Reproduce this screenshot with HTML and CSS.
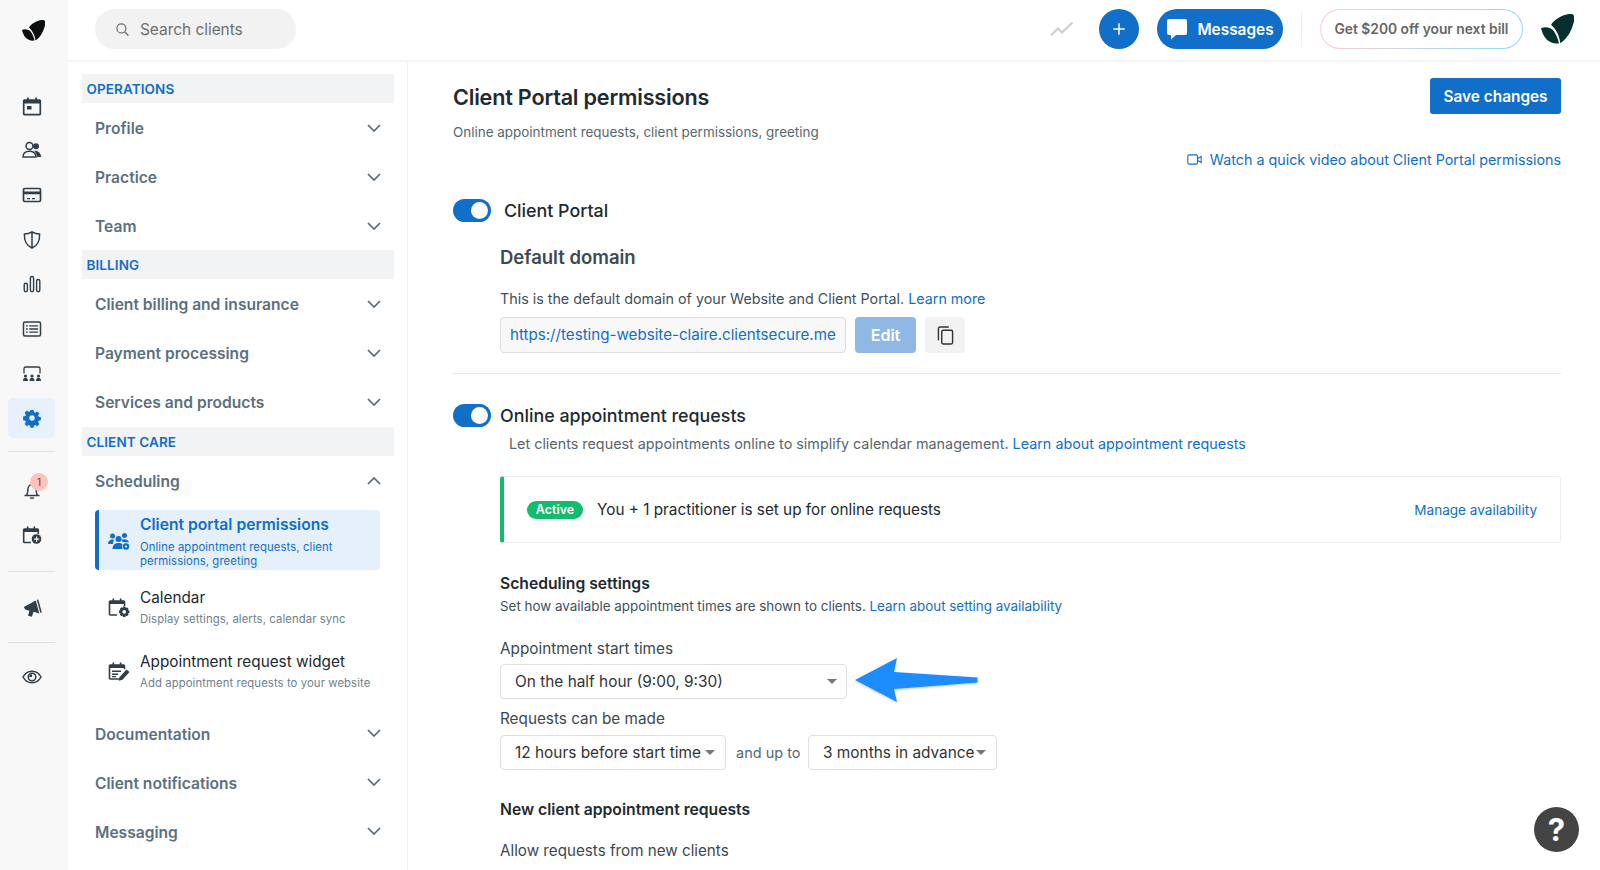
FILE: index.html
```html
<!DOCTYPE html>
<html lang="en">
<head>
<meta charset="utf-8">
<title>Client Portal permissions</title>
<link rel="stylesheet" href="styles.css">
</head>
<body>
<svg class="defs" width="0" height="0">
  <symbol id="chev" viewBox="0 0 14 8"><path d="M1 1l6 6 6-6" fill="none" stroke="currentColor" stroke-width="1.7"/></symbol>
  <symbol id="leaf" viewBox="0 0 46 42"><path d="M0 20C6 17 14 19 18 24C22 30 24 36 25 41C12 43 3 34 0 20Z"/><path d="M14 15C18 8 32-1 43 0C48 1 47 8 45 14C42 25 36 35 27 41C26 32 22 22 14 15Z"/></symbol>
  <symbol id="caret" viewBox="0 0 10 5"><path d="M0 0h10L5 5z"/></symbol>
</svg>
<div class="app">
  <nav class="rail">
    <svg class="logo"><use href="#leaf"/></svg>
    <div class="rail-group">
      <a class="rail-item"><svg viewBox="0 0 20 20"><path d="M2.500 4h15a.8.8 0 0 1 .8.8v13a.8.8 0 0 1-.8.8h-15a.8.8 0 0 1-.8-.8v-13A.8.8 0 0 1 2.500 4z" fill="none" stroke="currentColor" stroke-width="1.700"/><path d="M2 4h16v3.600H2zM5 1.600h1.800V5H5zM13.200 1.600H15V5h-1.800zM5 10h4.500v3.600H5z"/></svg></a>
      <a class="rail-item"><svg viewBox="0 0 20 20"><circle cx="7.500" cy="6" r="3.400" fill="none" stroke="currentColor" stroke-width="1.500"/><path d="M1 17c0-4 3-5.800 6.500-5.800 3 0 5.500 1.400 6.200 4.200l.2 1.600z" fill="none" stroke="currentColor" stroke-width="1.500"/><circle cx="14" cy="6.200" r="3"/><path d="M12 10.800c3.500-.8 6.800 1.600 7.200 6.200h-4.400c-.2-2.600-1.200-4.800-2.800-6.200z"/></svg></a>
      <a class="rail-item"><svg viewBox="0 0 20 20"><rect x="1.500" y="3.500" width="17" height="13" rx="1.300" fill="none" stroke="currentColor" stroke-width="1.700"/><path d="M2 6.500h16v2.800H2zM5 13h3v1.200H5zM10 13h3v1.200h-3z"/></svg></a>
      <a class="rail-item"><svg viewBox="0 0 20 20"><path d="M10 1.800c2.600 1.600 5 2.200 7.600 2.300.3 6.500-2 11.500-7.600 14-5.600-2.500-7.900-7.500-7.600-14C5 4 7.400 3.400 10 1.800zM10 2v16" fill="none" stroke="currentColor" stroke-width="1.500"/></svg></a>
      <a class="rail-item"><svg viewBox="0 0 20 20"><g fill="none" stroke="currentColor" stroke-width="1.400"><rect x="2.200" y="9.200" width="3.200" height="8.500" rx="1.600"/><rect x="8.400" y="2.500" width="3.200" height="15.200" rx="1.600"/><rect x="14.600" y="5.500" width="3.200" height="12.200" rx="1.600"/></g></svg></a>
      <a class="rail-item"><svg viewBox="0 0 20 20"><rect x="1.500" y="3" width="17" height="14" rx="1.500" fill="none" stroke="currentColor" stroke-width="1.500"/><path d="M4 6.200h1.800v1.400H4zM7.200 6.200H16v1.400H7.200zM4 9.300h1.800v1.400H4zM7.200 9.300H16v1.400H7.200zM4 12.400h1.800v1.400H4zM7.200 12.400H16v1.400H7.200z"/></svg></a>
      <a class="rail-item"><svg viewBox="0 0 20 20"><path d="M2 9.500V4.500a1.500 1.500 0 0 1 1.500-1.500h13a1.500 1.500 0 0 1 1.500 1.500v5" fill="none" stroke="currentColor" stroke-width="1.300"/><g><circle cx="3.500" cy="12" r="1.600"/><circle cx="10" cy="12" r="1.600"/><circle cx="16.500" cy="12" r="1.600"/><path d="M1 17c0-2.300 1-3.300 2.500-3.300S6 14.700 6 17zM7.500 17c0-2.300 1-3.300 2.500-3.300s2.500 1 2.500 3.300zM14 17c0-2.300 1-3.300 2.500-3.300S19 14.700 19 17z"/></g></svg></a>
      <a class="rail-item is-active"><svg viewBox="0 0 20 20"><path fill-rule="evenodd" d="M8.300 1h3.400l.5 2.500 1.400.6 2.200-1.400 2.400 2.400-1.400 2.200.6 1.400 2.500.5v3.400l-2.500.5-.6 1.400 1.400 2.200-2.400 2.400-2.200-1.400-1.400.6-.5 2.500H8.300l-.5-2.500-1.400-.6-2.200 1.400-2.400-2.400 1.400-2.200-.6-1.400-2.500-.5V8.200l2.500-.5.6-1.400-1.400-2.200 2.400-2.400 2.200 1.400 1.400-.6zM10 7a3 3 0 1 0 0 6 3 3 0 0 0 0-6z" transform="translate(1 1) scale(.9)"/></svg></a>
    </div>
    <div class="rail-rule rule-a"></div>
    <div class="rail-group rail-alerts">
      <a class="rail-item"><svg viewBox="0 0 20 20"><path d="M2.500 15.500h15M4.500 15.500c1-1.500 1.300-3 1.300-5.500 0-3 1.800-5.500 4.200-5.500s4.200 2.500 4.200 5.500c0 2.500.3 4 1.300 5.500" fill="none" stroke="currentColor" stroke-width="1.500"/><path d="M8 17.300h4v1.400H8z"/></svg><span class="badge">1</span></a>
      <a class="rail-item"><svg viewBox="0 0 20 20"><path d="M9 17.500H2.500a.8.800 0 0 1-.8-.8V4.800a.8.800 0 0 1 .8-.8h13a.8.800 0 0 1 .8.8V9" fill="none" stroke="currentColor" stroke-width="1.600"/><path d="M2 4h14v3H2zM4.800 1.500h1.700V5H4.800zM11.500 1.500h1.700V5h-1.700z"/><circle cx="14.500" cy="14" r="4.800"/><path d="M14 11.500h1.200V13.500h2V14.700h-2v2H14v-2h-2V13.500h2z" fill="#f8f8f8"/></svg></a>
    </div>
    <div class="rail-rule rule-b"></div>
    <div class="rail-group">
      <a class="rail-item"><svg viewBox="0 0 20 20"><path d="M1.800 8l12-6.500 3.500 13-5.800-1.700-1.600 5-3.800-1 1.300-5-4.200-1.300z"/><path d="M14.800 .8l1.500-.4 3.500 13-1.500.4z"/></svg></a>
    </div>
    <div class="rail-rule rule-c"></div>
    <div class="rail-group">
      <a class="rail-item"><svg viewBox="0 0 20 20"><path d="M1 10c2-3.800 5.200-5.800 9-5.800s7 2 9 5.800c-2 3.800-5.200 5.800-9 5.800S3 13.800 1 10z" fill="none" stroke="currentColor" stroke-width="1.500"/><circle cx="10" cy="10" r="3.800" fill="none" stroke="currentColor" stroke-width="1.500"/><path d="M10 7.200a2.800 2.800 0 0 0-2.800 2.800H10z"/></svg></a>
    </div>
  </nav>

  <div class="workspace">
    <header class="topbar">
      <div class="search">
        <svg viewBox="0 0 16 16"><circle cx="6.800" cy="6.800" r="4.800" fill="none" stroke="currentColor" stroke-width="1.300"/><path d="M10.300 10.300l4 4" stroke="currentColor" stroke-width="1.500"/></svg>
        <span>Search clients</span>
      </div>
      <div class="top-actions">
        <svg class="trend" viewBox="0 0 24 16"><path d="M1 14.500l7-7 4 4L22.500 1.500" fill="none" stroke="#cfcfcf" stroke-width="2.200"/></svg>
        <button class="round-add"><svg viewBox="0 0 16 16"><path d="M8 1.500v13M1.500 8h13" stroke="#fff" stroke-width="1.700"/></svg></button>
        <button class="messages"><svg viewBox="0 0 22 22"><path d="M3 1h16a2 2 0 0 1 2 2v12a2 2 0 0 1-2 2h-9l-5 4.500V17H3a2 2 0 0 1-2-2V3a2 2 0 0 1 2-2z" fill="#fff"/></svg>Messages</button>
        <span class="top-rule"></span>
        <a class="promo">Get $200 off your next bill</a>
        <svg class="avatar"><use href="#leaf"/></svg>
      </div>
    </header>

    <div class="panes">
      <aside class="sidebar">
        <h3 class="sec">OPERATIONS</h3>
        <a class="item">Profile<svg class="chev"><use href="#chev"/></svg></a>
        <a class="item">Practice<svg class="chev"><use href="#chev"/></svg></a>
        <a class="item">Team<svg class="chev"><use href="#chev"/></svg></a>
        <h3 class="sec">BILLING</h3>
        <a class="item">Client billing and insurance<svg class="chev"><use href="#chev"/></svg></a>
        <a class="item">Payment processing<svg class="chev"><use href="#chev"/></svg></a>
        <a class="item">Services and products<svg class="chev"><use href="#chev"/></svg></a>
        <h3 class="sec sec-care">CLIENT CARE</h3>
        <a class="item">Scheduling<svg class="chev chev-up"><use href="#chev"/></svg></a>
        <div class="subs">
          <a class="sub is-current">
            <svg viewBox="0 0 22 20"><circle cx="4.500" cy="5" r="2.500"/><circle cx="16.500" cy="4.500" r="2.500"/><circle cx="10.500" cy="8" r="3"/><path d="M0 13c0-3 2-4.500 4.500-4.500.8 0 1.300.1 1.800.3-.8 1-1.300 2.500-1.300 4.200zM4.500 18c0-4 2.500-6 6-6 1.800 0 3 .5 4 1.300-.5 1.500-.5 3 0 4.700z"/><path d="M13 8.800c1-.3 2.300-.5 3.500-.5 2 0 3.800 1 4.500 3h-6c-.5-1-1.200-1.800-2-2.500z"/><circle cx="18" cy="15.500" r="3.200"/><circle cx="18" cy="15.500" r="1.100" fill="#e6f0fa"/></svg>
            <span class="sub-text"><b>Client portal permissions</b><small>Online appointment requests, client permissions, greeting</small></span>
          </a>
          <a class="sub sub-cal">
            <svg viewBox="0 0 22 20"><path d="M9 18H2.500a1 1 0 0 1-1-1V5a1 1 0 0 1 1-1h13a1 1 0 0 1 1 1v4" fill="none" stroke="currentColor" stroke-width="1.600"/><path d="M2 4h14v3H2zM4.500 1.500h1.700V5H4.500zM11.800 1.500h1.700V5h-1.700z"/><path fill-rule="evenodd" d="M15 9.500h2.400l.3 1.500 1.300-.8 1.700 1.700-.8 1.300 1.500.3v2.400l-1.500.3.8 1.300-1.700 1.700-1.300-.8-.3 1.500H15l-.3-1.500-1.300.8-1.700-1.700.8-1.300-1.500-.3v-2.400l1.500-.3-.8-1.300 1.700-1.700 1.300.8zm1.200 3.600a1.800 1.800 0 1 0 0 3.600 1.800 1.800 0 0 0 0-3.600z"/></svg>
            <span class="sub-text"><b>Calendar</b><small>Display settings, alerts, calendar sync</small></span>
          </a>
          <a class="sub">
            <svg viewBox="0 0 22 20"><path d="M16.500 8V5a1 1 0 0 0-1-1h-13a1 1 0 0 0-1 1v12a1 1 0 0 0 1 1H11" fill="none" stroke="currentColor" stroke-width="1.600"/><path d="M2 4h14v3H2zM4.500 1.500h1.700V5H4.500zM11.800 1.500h1.700V5h-1.700zM4 9.500h9v1.500H4zM4 12.500h6V14H4zM4 15h4v1.300H4z"/><path d="M18.500 8.500l3 2.500-7 7.800-3.800 1 .8-3.500z"/></svg>
            <span class="sub-text"><b>Appointment request widget</b><small>Add appointment requests to your website</small></span>
          </a>
        </div>
        <a class="item">Documentation<svg class="chev"><use href="#chev"/></svg></a>
        <a class="item">Client notifications<svg class="chev"><use href="#chev"/></svg></a>
        <a class="item">Messaging<svg class="chev"><use href="#chev"/></svg></a>
      </aside>

      <main class="page">
        <div class="page-head">
          <h1>Client Portal permissions</h1>
          <button class="save">Save changes</button>
        </div>
        <p class="page-sub">Online appointment requests, client permissions, greeting</p>
        <p class="video-row"><a class="link"><svg viewBox="0 0 16 12"><rect x=".7" y="1" width="10.600" height="10" rx="1.500" fill="none" stroke="currentColor" stroke-width="1.200"/><path d="M11.500 5l3.800-2.200v6.400L11.500 7" fill="none" stroke="currentColor" stroke-width="1.200"/></svg>Watch a quick video about Client Portal permissions</a></p>

        <div class="toggle-row first">
          <span class="toggle"></span>
          <h2 class="toggle-title portal">Client Portal</h2>
        </div>
        <div class="indent">
          <h3 class="domain-title">Default domain</h3>
          <p class="domain-desc">This is the default domain of your Website and Client Portal. <a class="link">Learn more</a></p>
          <div class="domain-row">
            <span class="domain-input">https://testing-website-claire.clientsecure.me</span>
            <button class="edit">Edit</button>
            <button class="copy"><svg viewBox="0 0 18 20"><path d="M12.500 1H3a1.500 1.500 0 0 0-1.500 1.500V15" fill="none" stroke="#333" stroke-width="1.500"/><rect x="5" y="4.500" width="11.500" height="14.500" rx="1.500" fill="none" stroke="#333" stroke-width="1.500"/></svg></button>
          </div>
        </div>
        <hr class="rule">
        <div class="toggle-row second">
          <span class="toggle"></span>
          <h2 class="toggle-title">Online appointment requests</h2>
        </div>
        <p class="lead">Let clients request appointments online to simplify calendar management. <a class="link">Learn about appointment requests</a></p>

        <div class="indent">
          <div class="status">
            <span class="pill">Active</span>
            <span class="status-text">You + 1 practitioner is set up for online requests</span>
            <a class="link manage">Manage availability</a>
          </div>
          <h4 class="block-title sched">Scheduling settings</h4>
          <p class="block-desc">Set how available appointment times are shown to clients. <a class="link">Learn about setting availability</a></p>
          <label class="field-label start">Appointment start times</label>
          <div class="arrow-wrap">
            <span class="select wide">On the half hour (9:00, 9:30)<svg class="caret"><use href="#caret"/></svg></span>
            <svg class="arrow" viewBox="0 0 130 50"><defs><filter id="soft" x="-10%" y="-20%" width="120%" height="140%"><feDropShadow dx="0" dy="1" stdDeviation="1" flood-color="#000" flood-opacity=".25"/></filter></defs><path d="M4 25L46 3l-3 14 83.500 5.500v5L43 34l3 13z" fill="#1a8cff" filter="url(#soft)"/></svg>
          </div>
          <label class="field-label">Requests can be made</label>
          <div class="select-row">
            <span class="select notice">12 hours before start time<svg class="caret"><use href="#caret"/></svg></span>
            <span class="and">and up to</span>
            <span class="select advance">3 months in advance<svg class="caret"><use href="#caret"/></svg></span>
          </div>
          <h4 class="block-title newc">New client appointment requests</h4>
          <p class="allow">Allow requests from new clients</p>
        </div>
      </main>
    </div>
  </div>
  <button class="help">?</button>
</div>
</body>
</html>
```
FILE: styles.css
```css
* { box-sizing: border-box; }
html, body { margin: 0; height: 100%; }
body { font-family: Inter, "Liberation Sans", sans-serif; color: #22292f; background: #fff; overflow: hidden; }
h1, h2, h3, h4, p { margin: 0; }
button { font-family: inherit; border: 0; padding: 0; }
.defs { position: absolute; }
.app { position: relative; display: flex; height: 870px; overflow: hidden; }

/* Rail */
.rail { width: 68px; flex: none; background: #f8f8f8; display: flex; flex-direction: column; align-items: center; padding-right: 5px; }
.logo { width: 23px; height: 21px; margin: 20px 0 44.500px 4px; fill: #0b0f10; }
.rail-group { display: flex; flex-direction: column; width: 100%; align-items: center; gap: 4.700px; }
.rail-item { position: relative; width: 47px; height: 40px; display: flex; align-items: center; justify-content: center; border-radius: 5px; color: #2f3e48; fill: #2f3e48; }
.rail-item svg { width: 20px; height: 20px; fill: currentColor; }
.rail-item.is-active { background: #e7f1fb; color: #116ec9; }
.rail-rule { width: 47px; height: 1px; background: #dfdfdf; flex: none; }
.rule-a { margin: 13px 0 16px; }
.rule-b { margin: 16px 0 17px; }
.rule-c { margin: 13px 0 14px; }
.rail-alerts { gap: 5px; padding-top: 2px; }
.badge { position: absolute; left: 22px; top: 3px; width: 18px; height: 18px; border-radius: 50%; background: #fdc3bb; color: #6b3a33; font-size: 10px; line-height: 18px; text-align: center; }

/* Top bar */
.workspace { flex: 1; min-width: 0; display: flex; flex-direction: column; }
.topbar { height: 62px; flex: none; border-bottom: 2px solid #f5f5f5; display: flex; align-items: flex-start; justify-content: space-between; padding: 9px 26px 0 27px; }
.search { width: 201px; height: 40px; background: #f2f2f2; border-radius: 20px; display: flex; align-items: center; padding-left: 20px; gap: 10px; color: #6f6f6f; font-size: 15.400px; }
.search svg { width: 15px; height: 15px; }
.top-actions { display: flex; align-items: center; height: 40px; }
.trend { width: 24px; height: 16px; margin-right: 25px; }
.round-add { width: 40px; height: 40px; border-radius: 50%; background: #116ec9; display: flex; align-items: center; justify-content: center; margin-right: 18px; }
.round-add svg { width: 14px; height: 14px; }
.messages { width: 126px; height: 40px; border-radius: 20px; background: #116ec9; color: #fff; font-size: 15.400px; font-weight: 600; display: flex; align-items: center; justify-content: center; gap: 9px; }
.messages svg { width: 22px; height: 22px; }
.top-rule { width: 1px; height: 36px; background: #f0f0f0; margin: 0 18px; }
.promo { width: 203px; height: 40px; border-radius: 20px; border: 1px solid transparent; background: linear-gradient(#fff, #fff) padding-box, linear-gradient(90deg, #fbcfcf, #8edcf5) border-box; color: #666; font-size: 13.800px; font-weight: 600; line-height: 38px; text-align: center; white-space: nowrap; }
.avatar { width: 33px; height: 30px; margin-left: 18px; fill: #06302e; }

/* Sidebar */
.panes { flex: 1; display: flex; min-height: 0; }
.sidebar { width: 340px; flex: none; padding: 12px 13px 0 14px; border-right: 1px solid #f1f1f1; overflow: hidden; }
.sec { height: 29px; background: #f2f3f5; color: #116ec9; font-size: 13.500px; font-weight: 600; line-height: 31px; padding-left: 4.500px; letter-spacing: .1px; }
.sec-care { margin-top: 1px; }
.item { height: 49px; display: flex; align-items: center; justify-content: space-between; padding: 2px 0 0 13px; margin-right: 13.500px; color: #5b6f7e; font-size: 15.600px; font-weight: 600; }
.chev { width: 14px; height: 8px; margin-top: -2px; color: #566a78; }
.chev-up { transform: rotate(180deg); }
.subs { padding: 5px 0 6.500px 13px; margin-right: 14px; }
.sub { display: flex; height: 64px; padding: 2px 0 0 14px; align-items: center; gap: 10px; color: #2f3e48; fill: #2f3e48; }
.sub-cal { height: 65px; }
.sub > svg { width: 22px; height: 20px; flex: none; fill: currentColor; margin-left: -1px; }
.sub-text { display: flex; flex-direction: column; }
.sub-text b { font-size: 15.300px; font-weight: 400; line-height: 22px; color: #22292f; }
.sub-text small { font-size: 11.300px; line-height: 13.300px; color: #6d7f8c; margin-top: 4px; letter-spacing: .1px; }
.sub.is-current { height: 60px; margin-bottom: 3px; padding-left: 10px; border-left: 4px solid #116ec9; border-radius: 4px; background: #e6f0fa; color: #116ec9; }
.sub.is-current b { font-size: 15.650px; font-weight: 600; color: #116ec9; }
.sub.is-current small { color: #116ec9; margin-top: 5px; }
.sub.is-current .sub-text { width: 225px; }

/* Main */
.page { flex: 1; min-width: 0; padding: 16px 39px 0 45px; overflow: hidden; position: relative; }
.page-head { height: 36px; display: flex; justify-content: space-between; align-items: center; }
h1 { font-size: 21.600px; font-weight: 600; line-height: 30px; padding-top: 1px; color: #22292f; letter-spacing: -.2px; }
.save { width: 131px; height: 36px; border-radius: 3px; background: #116ec9; color: #fff; font-size: 15.400px; font-weight: 600; }
.page-sub { margin-top: 8px; font-size: 13.450px; line-height: 20px; color: #59666f; }
.video-row { margin-top: 8px; line-height: 20px; font-size: 14.300px; text-align: right; }
.link { color: #116ec9; }
.video-row svg { width: 15px; height: 11px; margin-right: 8px; }
.toggle-row { display: flex; align-items: center; height: 23px; }
.toggle-row.first { margin-top: 29px; }
.toggle-row.second { margin-top: 30px; }
.toggle { position: relative; width: 38px; height: 23px; border-radius: 12px; background: #116ec9; flex: none; }
.toggle::after { content: ""; position: absolute; right: 3px; top: 3px; width: 17px; height: 17px; border-radius: 50%; background: #fff; }
.toggle-title { font-size: 17.850px; font-weight: 500; line-height: 24px; margin-left: 9px; color: #22292f; }
.toggle-title.portal { margin-left: 13px; }
.indent { margin-left: 47px; }
.domain-title { margin-top: 22px; font-size: 18.500px; font-weight: 600; line-height: 26px; color: #3c4a54; }
.domain-desc { margin-top: 19px; font-size: 14.300px; line-height: 20px; color: #40505a; }
.domain-row { display: flex; margin-top: 8px; height: 36px; }
.domain-input { width: 346px; border: 1px solid #dcdcdc; border-radius: 4px; background: #f8f8f8; color: #116ec9; font-size: 15.150px; line-height: 34px; padding-left: 9px; white-space: nowrap; }
.edit { width: 61px; margin-left: 9px; border-radius: 4px; background: #8fb9e4; color: #fff; font-size: 16px; font-weight: 600; }
.copy { width: 40px; margin-left: 9px; border-radius: 4px; background: #f2f2f2; display: flex; align-items: center; justify-content: center; }
.copy svg { width: 17px; height: 19px; }
.rule { border: 0; height: 1px; background: #e9e9e9; margin: 20px 0 0; }
.lead { margin: 7px 0 0 56px; font-size: 14.350px; line-height: 20px; color: #59666f; }
.status { display: flex; align-items: center; height: 67px; margin-top: 22px; padding: 0 23px; border: 1px solid #eeeeee; border-left: 4px solid #12bc6e; border-radius: 3px; }
.pill { width: 56px; height: 18px; border-radius: 9px; background: #12bc6e; color: #fff; font-size: 12.500px; font-weight: 600; line-height: 18px; text-align: center; }
.status-text { margin-left: 14px; font-size: 15.300px; color: #22292f; }
.manage { margin-left: auto; font-size: 13.550px; }
.block-title { font-size: 15.700px; font-weight: 600; line-height: 22px; color: #22292f; }
.sched { margin-top: 30px; }
.newc { margin-top: 29px; }
.block-desc { margin-top: 2px; font-size: 13.400px; line-height: 18px; color: #40505a; }
.field-label { display: block; margin-top: 10px; font-size: 15.300px; line-height: 20px; color: #3d4850; }
.field-label.start { margin-top: 24px; }
.arrow-wrap { position: relative; margin-top: 5px; height: 35px; }
.arrow { position: absolute; left: 351px; top: -9px; width: 130px; height: 50px; }
.select { display: inline-flex; align-items: center; justify-content: space-between; height: 35px; border: 1px solid #dfdfdf; border-radius: 4px; background: #fff; font-size: 15.400px; color: #333; padding: 0 10px 0 14px; white-space: nowrap; }
.caret { width: 10px; height: 5px; fill: #777; flex: none; }
.wide { width: 347px; padding-right: 9px; }
.select-row { display: flex; align-items: center; margin-top: 6px; }
.notice { width: 226px; }
.and { width: 82px; padding-left: 10px; font-size: 14.500px; color: #59666f; }
.advance { width: 189px; padding-left: 14px; }
.allow { margin-top: 20px; font-size: 15.200px; line-height: 20px; color: #3d4850; }

.help { position: absolute; left: 1534px; top: 807px; width: 45px; height: 45px; border-radius: 50%; background: #444; color: #fff; font-size: 31px; font-weight: 700; line-height: 45px; text-align: center; }
```
